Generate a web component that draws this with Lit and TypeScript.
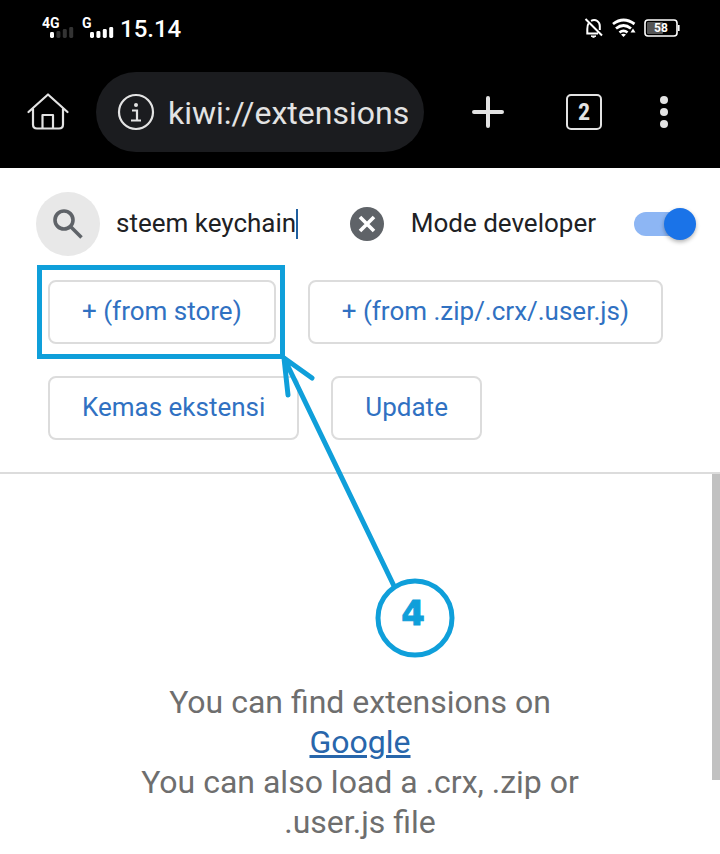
import { LitElement, html, css, svg } from "lit";
import { customElement, property, state } from "lit/decorators.js";

@customElement("status-bar")
class StatusBar extends LitElement {
  static styles = css`
    :host {
      display: flex;
      align-items: center;
      justify-content: space-between;
      box-sizing: border-box;
      height: 56px;
      padding: 0 40px 0 42px;
      background: #000;
      color: #fff;
      font-family: Roboto, sans-serif;
    }
    .side {
      display: flex;
      align-items: center;
      gap: 8px;
    }
    .signal {
      gap: 6px;
    }
    svg {
      display: block;
    }
    .net {
      font: 700 14px Roboto, sans-serif;
      fill: #fff;
    }
    .clock {
      font-size: 24px;
      font-weight: 500;
      line-height: 28px;
      padding-top: 2px;
    }
    .level {
      font: 700 12px Roboto, sans-serif;
      fill: #fff;
    }
  `;

  private bars(x: number, active: number) {
    const heights = [6, 7, 9, 11];
    return heights.map(
      (h, i) => svg`<rect x=${x + i * 6.4} y=${24 - h} width="4" height=${h} rx="1.4"
        fill=${i < active ? "#fff" : "#333"}></rect>`
    );
  }

  render() {
    return html`
      <div class="side signal">
        <svg width="72" height="28" viewBox="0 0 72 28" role="img" aria-label="Signal">
          <text class="net" x="0" y="14">4G</text>
          <text class="net" x="40" y="14">G</text>
          ${this.bars(8, 1)} ${this.bars(48, 4)}
        </svg>
        <time class="clock">15.14</time>
      </div>
      <div class="side">
        <svg width="20" height="20" viewBox="0 0 20 20" fill="none" stroke="#fff" stroke-width="2" role="img" aria-label="Muted">
          <path d="M1.500 1L18 17.500M4.500 5.500C3.400 7 3.300 9 3.300 11V15.500H14M7 2.800C12 .5 15.800 4 15.800 8V12" />
          <path d="M7 18h5l-2.500 1.600z" fill="#fff" stroke-width="1" />
        </svg>
        <svg width="24" height="20" viewBox="0 0 24 20" fill="none" stroke="#fff" stroke-width="2.8" role="img" aria-label="Wi-Fi">
          <path d="M1 6Q11.500 -2 22.500 6M4 10.500Q11.500 4.500 19 10.500M7.500 14.500Q11.500 11.200 15.500 14.500" />
          <path d="M9 16.500Q11.500 15 14 16.500L11.500 19z" fill="#fff" stroke="none" />
          <path d="M18.500 14.500h5l-2.500-4z" fill="#fff" stroke="none" />
        </svg>
        <svg width="36" height="18" viewBox="0 0 36 18" role="img" aria-label="Battery">
          <rect x="1" y="1" width="32" height="16" rx="3" fill="#000" stroke="#fff" stroke-width="1.600" />
          <rect x="3" y="3" width="16" height="12" rx="1" fill="#555" />
          <rect x="34" y="6" width="1.600" height="6" fill="#fff" />
          <text class="level" x="17" y="13" text-anchor="middle">58</text>
        </svg>
      </div>
    `;
  }
}

@customElement("browser-toolbar")
class BrowserToolbar extends LitElement {
  @property() url = "";
  @property({ type: Number }) tabs = 1;

  static styles = css`
    :host {
      display: flex;
      align-items: center;
      box-sizing: border-box;
      height: 112px;
      padding-right: 8px;
      background: #000;
      color: #e3e3e3;
      font-family: Roboto, sans-serif;
    }
    button {
      display: grid;
      place-items: center;
      flex: none;
      height: 80px;
      padding: 0;
      border: 0;
      background: none;
      color: inherit;
      font: inherit;
    }
    .home,
    .menu {
      width: 96px;
    }
    .add {
      width: 128px;
    }
    .tabs {
      width: 64px;
    }
    .address {
      display: flex;
      align-items: center;
      gap: 12px;
      flex: 1;
      min-width: 0;
      box-sizing: border-box;
      height: 80px;
      padding: 0 16px 0 20px;
      border-radius: 40px;
      background: #1b1c1f;
    }
    .address svg {
      flex: none;
    }
    .url {
      flex: 1;
      min-width: 0;
      height: 48px;
      padding: 2px 0 0;
      border: 0;
      outline: 0;
      background: none;
      color: inherit;
      font: 32px Roboto, sans-serif;
    }
    .count {
      display: grid;
      place-items: center;
      box-sizing: border-box;
      width: 36px;
      height: 36px;
      border: 2px solid;
      border-radius: 5px;
      font: 700 24px/32px "Roboto Condensed", "Liberation Sans Narrow", Roboto, sans-serif;
    }
    svg {
      display: block;
    }
  `;

  render() {
    return html`
      <button class="home" aria-label="Home">
        <svg width="42" height="40" viewBox="0 0 42 40" fill="none" stroke="currentColor" stroke-width="2.200" stroke-linecap="round" stroke-linejoin="round">
          <path d="M1.500 20L21 2.500L40.500 20M6 17V32.500Q6 36.500 10 36.500H32Q36 36.500 36 32.500V17M15.500 36V23H26V36" />
        </svg>
      </button>
      <div class="address">
        <svg width="40" height="40" viewBox="0 0 40 40" fill="none" stroke="currentColor" stroke-width="2.200" role="img" aria-label="Page info">
          <circle cx="20" cy="20" r="17" />
          <circle cx="20" cy="13" r="2" fill="currentColor" stroke="none" />
          <path d="M16 18.500H21V28.500M15 28.500H25" />
        </svg>
        <input class="url" aria-label="Address" .value=${this.url} />
      </div>
      <button class="add" aria-label="New tab">
        <svg width="32" height="32" viewBox="0 0 32 32" stroke="currentColor" stroke-width="4" stroke-linecap="round">
          <path d="M2 16H30M16 2V30" />
        </svg>
      </button>
      <button class="tabs" aria-label="Open tabs"><span class="count">${this.tabs}</span></button>
      <button class="menu" aria-label="Menu">
        <svg width="8" height="32" viewBox="0 0 8 32" fill="currentColor">
          <circle cx="4" cy="4" r="4" />
          <circle cx="4" cy="16" r="4" />
          <circle cx="4" cy="28" r="4" />
        </svg>
      </button>
    `;
  }
}

@customElement("step-callout")
class StepCallout extends LitElement {
  @property({ type: Number }) step = 1;

  static styles = css`
    :host {
      position: absolute;
      top: -15px;
      left: -11px;
      z-index: 1;
      pointer-events: none;
    }
    svg {
      display: block;
      fill: none;
      stroke: #0f9fda;
      stroke-width: 5;
      stroke-linecap: round;
    }
    .number {
      font: 700 34px "DejaVu Sans", sans-serif;
      fill: #0f9fda;
      stroke-width: 1;
    }
  `;

  render() {
    return html`
      <svg width="420" height="396" viewBox="0 0 420 396">
        <rect x="2.500" y="2.500" width="243" height="89" />
        <path d="M247 93L357 321M247 93L275 113M247 93L251 130" />
        <circle cx="378" cy="353" r="37" />
        <text class="number" x="376" y="360" text-anchor="middle">${this.step}</text>
      </svg>
    `;
  }
}

@customElement("app-root")
class AppRoot extends LitElement {
  @state() private query = "steem keychain";

  static styles = css`
    :host {
      display: flex;
      flex-direction: column;
      min-height: 100vh;
      background: #fff;
      color: #202124;
      font-family: Roboto, sans-serif;
      font-size: 26px;
      line-height: 32px;
    }
    .panel {
      padding: 24px 24px 32px 36px;
      border-bottom: 2px solid #dcdcdc;
    }
    .search {
      display: flex;
      align-items: center;
      height: 64px;
    }
    button {
      flex: none;
      padding: 0;
      border: 0;
      background: none;
      font: inherit;
    }
    svg {
      display: block;
    }
    .find {
      display: grid;
      place-items: center;
      width: 64px;
      height: 64px;
      margin-right: 16px;
      border-radius: 50%;
      background: #e8e8e8;
    }
    .field {
      display: flex;
      align-items: center;
      flex: 1;
      min-width: 0;
    }
    .query {
      field-sizing: content;
      min-width: 0;
      padding: 0 0 2px;
      border: 0;
      outline: 0;
      color: inherit;
      font: inherit;
    }
    .caret {
      width: 2px;
      height: 30px;
      background: #1f5f9f;
    }
    .clear {
      margin-right: 27px;
    }
    .mode {
      display: flex;
      align-items: center;
      gap: 38px;
      white-space: nowrap;
    }
    .mode-name {
      padding-bottom: 2px;
    }
    .switch {
      appearance: none;
      position: relative;
      display: flex;
      align-items: center;
      width: 62px;
      height: 32px;
      margin: 0;
    }
    .switch::before {
      content: "";
      width: 56px;
      height: 24px;
      border-radius: 12px;
      background: #8db6f4;
    }
    .switch::after {
      content: "";
      position: absolute;
      right: 0;
      width: 32px;
      height: 32px;
      border-radius: 50%;
      background: #1a73e8;
      box-shadow: 0 2px 4px rgba(0, 0, 0, 0.3);
    }
    .actions {
      display: flex;
      flex-wrap: wrap;
      gap: 32px;
      padding: 24px 0 0 12px;
    }
    .slot {
      position: relative;
    }
    .action {
      box-sizing: border-box;
      height: 64px;
      padding: 0 32px 2px;
      border: 2px solid #dcdcdc;
      border-radius: 8px;
      background: #fff;
      color: #3071c2;
      white-space: nowrap;
    }
    .results {
      position: relative;
      flex: 1;
      padding: 208px 128px 12px;
      color: #6e6e6e;
      font-size: 32px;
      line-height: 40px;
      text-align: center;
    }
    .results p {
      margin: 0;
    }
    .results a {
      color: #2866ab;
    }
    .thumb {
      position: absolute;
      top: 0;
      right: 0;
      width: 8px;
      height: 306px;
      background: #c1c1c1;
    }
  `;

  render() {
    return html`
      <status-bar></status-bar>
      <browser-toolbar url="kiwi://extensions" .tabs=${2}></browser-toolbar>
      <section class="panel">
        <div class="search">
          <button class="find" aria-label="Search">
            <svg width="32" height="32" viewBox="0 0 32 32" fill="none" stroke="#5f6368" stroke-width="3.600">
              <circle cx="12" cy="12" r="9" />
              <path d="M18.500 18.500L29.500 29.500" />
            </svg>
          </button>
          <div class="field">
            <input
              class="query"
              aria-label="Search extensions"
              .value=${this.query}
              @input=${(e: InputEvent) => (this.query = (e.target as HTMLInputElement).value)}
            />
            <span class="caret"></span>
          </div>
          <button class="clear" aria-label="Clear search" @click=${() => (this.query = "")}>
            <svg width="34" height="34" viewBox="0 0 34 34">
              <circle cx="17" cy="17" r="17" fill="#5f6368" />
              <path d="M10 10L24 24M24 10L10 24" stroke="#fff" stroke-width="3.600" />
            </svg>
          </button>
          <label class="mode"><span class="mode-name">Mode developer</span><input class="switch" type="checkbox" checked /></label>
        </div>
        <div class="actions">
          <div class="slot">
            <button class="action">+ (from store)</button>
            <step-callout .step=${4}></step-callout>
          </div>
          <button class="action">+ (from .zip/.crx/.user.js)</button>
          <button class="action">Kemas ekstensi</button>
          <button class="action">Update</button>
        </div>
      </section>
      <main class="results">
        <div class="thumb"></div>
        <p>You can find extensions on <a href="#google">Google</a></p>
        <p>You can also load a .crx, .zip or .user.js file</p>
      </main>
    `;
  }
}
